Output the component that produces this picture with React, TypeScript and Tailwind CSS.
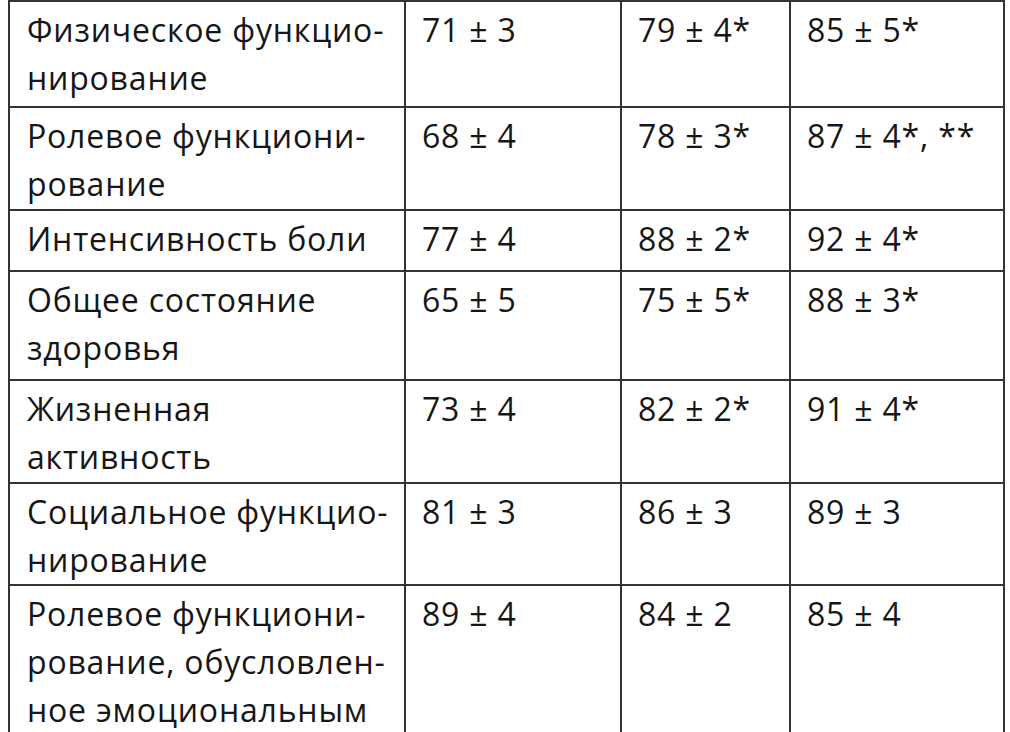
const rows: { label: string[]; values: string[]; h: string }[] = [
  { label: ["Физическое функцио-", "нирование"], values: ["71 ± 3", "79 ± 4*", "85 ± 5*"], h: "h-[106px]" },
  { label: ["Ролевое функциони-", "рование"], values: ["68 ± 4", "78 ± 3*", "87 ± 4*, **"], h: "h-[103px]" },
  { label: ["Интенсивность боли"], values: ["77 ± 4", "88 ± 2*", "92 ± 4*"], h: "h-[61px]" },
  { label: ["Общее состояние", "здоровья"], values: ["65 ± 5", "75 ± 5*", "88 ± 3*"], h: "h-[109px]" },
  { label: ["Жизненная", "активность"], values: ["73 ± 4", "82 ± 2*", "91 ± 4*"], h: "h-[103px]" },
  { label: ["Социальное функцио-", "нирование"], values: ["81 ± 3", "86 ± 3", "89 ± 3"], h: "h-[102px]" },
  {
    label: ["Ролевое функциони-", "рование, обусловлен-", "ное эмоциональным"],
    values: ["89 ± 4", "84 ± 2", "85 ± 4"],
    h: "h-[160px]",
  },
];

export default function App() {
  return (
    <div className="w-[1010px] h-[732px] overflow-hidden bg-white">
      <table
        className="ml-[8px] w-[995px] table-fixed border-collapse text-[32px] leading-[48px] tracking-[0.025em] text-[#161616]"
        style={{ fontFamily: '"Open Sans", "Noto Sans", sans-serif' }}
      >
        <colgroup>
          <col className="w-[396px]" />
          <col className="w-[216px]" />
          <col className="w-[169px]" />
          <col className="w-[214px]" />
        </colgroup>
        <tbody>
          {rows.map((row, i) => (
            <tr key={i} className={row.h}>
              <td className="border-2 border-[#333] pl-[17px] pt-[4px] align-top">
                {row.label.map((line, j) => (
                  <div key={j} className="whitespace-nowrap">
                    {line}
                  </div>
                ))}
              </td>
              {row.values.map((v, j) => (
                <td key={j} className="border-2 border-[#333] pl-[16px] pt-[4px] align-top whitespace-nowrap">
                  {v}
                </td>
              ))}
            </tr>
          ))}
        </tbody>
      </table>
    </div>
  );
}
